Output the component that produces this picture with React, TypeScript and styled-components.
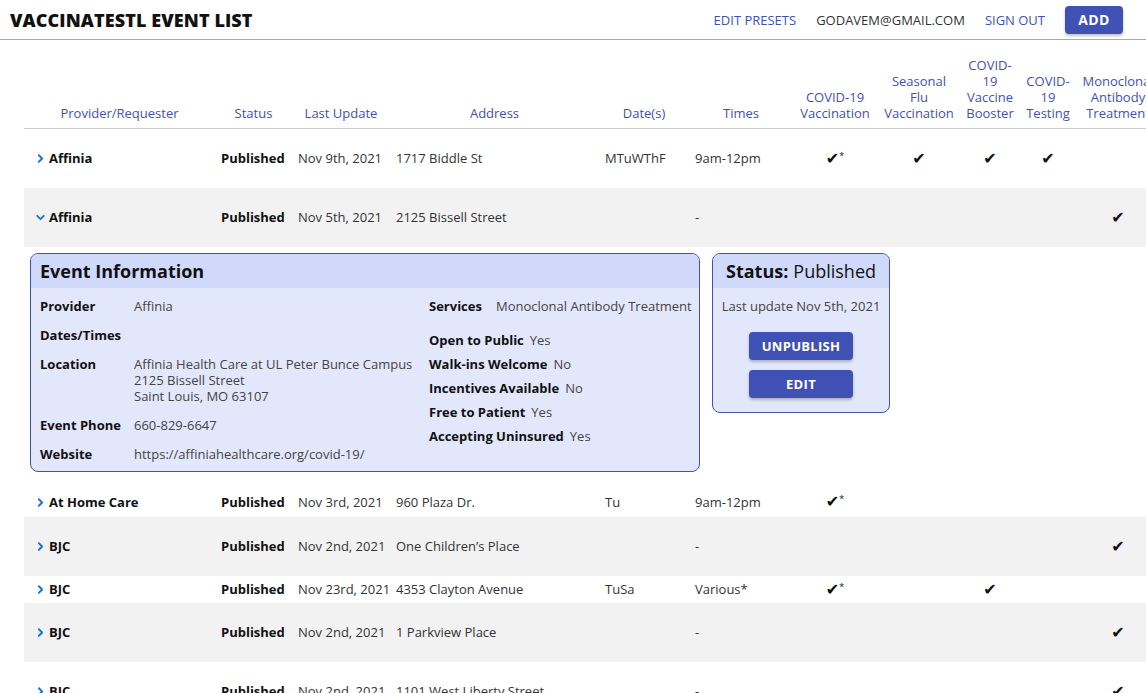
import React from 'react';
import styled, { createGlobalStyle } from 'styled-components';
import { ChevronRight, ChevronDown } from 'lucide-react';

const PRIMARY = '#3f51b5';

interface IEvent {
  id: number;
  name: string;
  status: string;
  updated: string;
  address: string;
  dates: string;
  times: string;
  services: string[];
  height: number;
  expanded?: boolean;
}

const COLUMNS: { label: string[]; width: number }[] = [
  { label: ['Provider/Requester'], width: 191 },
  { label: ['Status'], width: 77 },
  { label: ['Last Update'], width: 98 },
  { label: ['Address'], width: 209 },
  { label: ['Date(s)'], width: 90 },
  { label: ['Times'], width: 104 },
  { label: ['COVID-19', 'Vaccination'], width: 84 },
  { label: ['Seasonal', 'Flu', 'Vaccination'], width: 84 },
  { label: ['COVID-', '19', 'Vaccine', 'Booster'], width: 58 },
  { label: ['COVID-', '19', 'Testing'], width: 58 },
  { label: ['Monoclonal', 'Antibody', 'Treatment'], width: 82 },
];

// service columns: '' = none, 'y' = check, 's' = check with asterisk
const EVENTS: IEvent[] = [
  { id: 1, name: 'Affinia', status: 'Published', updated: 'Nov 9th, 2021', address: '1717 Biddle St', dates: 'MTuWThF', times: '9am-12pm', services: ['s', 'y', 'y', 'y', ''], height: 59 },
  { id: 2, name: 'Affinia', status: 'Published', updated: 'Nov 5th, 2021', address: '2125 Bissell Street', dates: '', times: '-', services: ['', '', '', '', 'y'], height: 59, expanded: true },
  { id: 3, name: 'At Home Care', status: 'Published', updated: 'Nov 3rd, 2021', address: '960 Plaza Dr.', dates: 'Tu', times: '9am-12pm', services: ['s', '', '', '', ''], height: 30 },
  { id: 4, name: 'BJC', status: 'Published', updated: 'Nov 2nd, 2021', address: 'One Children’s Place', dates: '', times: '-', services: ['', '', '', '', 'y'], height: 59 },
  { id: 5, name: 'BJC', status: 'Published', updated: 'Nov 23rd, 2021', address: '4353 Clayton Avenue', dates: 'TuSa', times: 'Various*', services: ['s', '', 'y', '', ''], height: 27 },
  { id: 6, name: 'BJC', status: 'Published', updated: 'Nov 2nd, 2021', address: '1 Parkview Place', dates: '', times: '-', services: ['', '', '', '', 'y'], height: 59 },
  { id: 7, name: 'BJC', status: 'Published', updated: 'Nov 2nd, 2021', address: '1101 West Liberty Street', dates: '', times: '-', services: ['', '', '', '', 'y'], height: 59 },
];

const FLAGS = [
  ['Open to Public', 'Yes'],
  ['Walk-ins Welcome', 'No'],
  ['Incentives Available', 'No'],
  ['Free to Patient', 'Yes'],
  ['Accepting Uninsured', 'Yes'],
];

function Check({ kind }: { kind: string }) {
  if (!kind) return null;
  return (
    <CheckMark>
      ✔{kind === 's' && <sup>*</sup>}
    </CheckMark>
  );
}

function EventDetails() {
  return (
    <DetailsWrapper>
      <InfoCard>
        <CardHeader>Event Information</CardHeader>
        <InfoBody>
          <InfoGrid>
            <Label>Provider</Label>
            <Value>Affinia</Value>
            <Label>Dates/Times</Label>
            <Value />
            <Label>Location</Label>
            <Value>
              Affinia Health Care at UL Peter Bunce Campus
              <br />
              2125 Bissell Street
              <br />
              Saint Louis, MO 63107
            </Value>
            <Label>Event Phone</Label>
            <Value>660-829-6647</Value>
            <Label>Website</Label>
            <Value>https://affiniahealthcare.org/covid-19/</Value>
          </InfoGrid>
          <div>
            <ServicesRow>
              <Label>Services</Label>
              <Value>Monoclonal Antibody Treatment</Value>
            </ServicesRow>
            <FlagList>
              {FLAGS.map(([label, value]) => (
                <FlagRow key={label}>
                  <Label>{label}</Label>
                  <Value>{value}</Value>
                </FlagRow>
              ))}
            </FlagList>
          </div>
        </InfoBody>
      </InfoCard>
      <StatusCard>
        <CardHeader $center>
          <b>Status:</b> Published
        </CardHeader>
        <StatusBody>
          <Value>Last update Nov 5th, 2021</Value>
          <ButtonStack>
            <Button $wide>UNPUBLISH</Button>
            <Button $wide>EDIT</Button>
          </ButtonStack>
        </StatusBody>
      </StatusCard>
    </DetailsWrapper>
  );
}

export default function App() {
  return (
    <>
      <GlobalStyle />
      <TopBar>
        <Title>VACCINATESTL EVENT LIST</Title>
        <Nav>
          <NavLink>EDIT PRESETS</NavLink>
          <NavLink $muted>GODAVEM@GMAIL.COM</NavLink>
          <NavLink>SIGN OUT</NavLink>
          <Button>ADD</Button>
        </Nav>
      </TopBar>
      <TableArea>
        <EventTable>
          <colgroup>
            {COLUMNS.map((c, i) => (
              <col key={i} style={{ width: c.width }} />
            ))}
          </colgroup>
          <thead>
            <tr>
              {COLUMNS.map((c, i) => (
                <HeadCell key={i}>
                  {c.label.map((line, j) => (
                    <HeadLine key={j}>{line}</HeadLine>
                  ))}
                </HeadCell>
              ))}
            </tr>
          </thead>
          <tbody>
            {EVENTS.map((e, i) => (
              <React.Fragment key={e.id}>
                <Row $striped={i % 2 === 1} style={{ height: e.height }}>
                  <NameCell>
                    <Toggle>
                      {e.expanded ? (
                        <ChevronDown size={13} strokeWidth={3.5} />
                      ) : (
                        <ChevronRight size={13} strokeWidth={3.5} />
                      )}
                    </Toggle>
                    {e.name}
                  </NameCell>
                  <StrongCell>{e.status}</StrongCell>
                  <Cell>{e.updated}</Cell>
                  <Cell>{e.address}</Cell>
                  <Cell>{e.dates}</Cell>
                  <Cell>{e.times}</Cell>
                  {e.services.map((s, j) => (
                    <CheckCell key={j}>
                      <Check kind={s} />
                    </CheckCell>
                  ))}
                </Row>
                {e.expanded && (
                  <tr>
                    <DetailCell colSpan={COLUMNS.length}>
                      <EventDetails />
                    </DetailCell>
                  </tr>
                )}
              </React.Fragment>
            ))}
          </tbody>
        </EventTable>
      </TableArea>
    </>
  );
}

const GlobalStyle = createGlobalStyle`
  html, body {
    margin: 0;
    overflow: hidden;
    background: #fff;
    font-family: "Open Sans", "Noto Sans", sans-serif;
    color: #222;
  }
`;

const TopBar = styled.header`
  height: 39px;
  display: flex;
  align-items: center;
  justify-content: space-between;
  padding: 0 23px 0 10px;
  border-bottom: 1px solid #aaa;
`;

const Title = styled.h1`
  margin: 0;
  font-size: 18px;
  font-weight: 800;
  color: #111;
  letter-spacing: 0.1px;
`;

const Nav = styled.nav`
  display: flex;
  align-items: center;
  column-gap: 20px;
`;

const NavLink = styled.a<{ $muted?: boolean }>`
  font-size: 13px;
  color: ${({ $muted }) => ($muted ? '#333' : PRIMARY)};
  cursor: pointer;
`;

const Button = styled.button<{ $wide?: boolean }>`
  height: 28px;
  width: ${({ $wide }) => ($wide ? '104px' : '58px')};
  border: none;
  border-radius: 4px;
  background: ${PRIMARY};
  color: #fff;
  font-family: inherit;
  font-size: ${({ $wide }) => ($wide ? '13px' : '14px')};
  font-weight: 700;
  letter-spacing: 0.3px;
  box-shadow: 0 2px 3px rgba(0, 0, 0, 0.25);
  cursor: pointer;
`;

const TableArea = styled.main`
  padding: 13px 0 0 24px;
`;

const EventTable = styled.table`
  table-layout: fixed;
  width: 1135px;
  border-collapse: collapse;
  font-size: 13px;
`;

const HeadCell = styled.th`
  padding: 4px 0 7px;
  vertical-align: bottom;
  text-align: center;
  white-space: nowrap;
  font-weight: 400;
  color: ${PRIMARY};
  border-bottom: 1px solid #ccc;
`;

const HeadLine = styled.div`
  height: 16px;
  line-height: 16px;
`;

const Row = styled.tr<{ $striped: boolean }>`
  background: ${({ $striped }) => ($striped ? '#f2f2f2' : '#fff')};
`;

const Cell = styled.td`
  padding: 0 0 0 6px;
  vertical-align: middle;
  white-space: nowrap;
  color: #333;
`;

const StrongCell = styled(Cell)`
  font-weight: 700;
  color: #111;
`;

const NameCell = styled(StrongCell)`
  padding-left: 10px;
`;

const Toggle = styled.span`
  display: inline-flex;
  vertical-align: -2px;
  margin-right: 2px;
  color: #1976d2;
`;

const CheckCell = styled.td`
  text-align: center;
  vertical-align: middle;
`;

const CheckMark = styled.span`
  font-family: "DejaVu Sans", sans-serif;
  font-size: 16px;
  color: #111;

  sup {
    font-family: "Open Sans", sans-serif;
    font-size: 9px;
    vertical-align: 5px;
  }
`;

const DetailCell = styled.td`
  padding: 6px 6px 15px;
  background: #fff;
`;

const DetailsWrapper = styled.div`
  display: flex;
  align-items: flex-start;
  column-gap: 12px;
`;

const Card = styled.section`
  border: 1px solid ${PRIMARY};
  border-radius: 8px;
  background: #e3e7fc;
  overflow: hidden;
  box-sizing: border-box;
`;

const InfoCard = styled(Card)`
  width: 670px;
`;

const StatusCard = styled(Card)`
  width: 178px;
`;

const CardHeader = styled.div<{ $center?: boolean }>`
  height: 34px;
  display: flex;
  align-items: center;
  justify-content: ${({ $center }) => ($center ? 'center' : 'flex-start')};
  column-gap: 5px;
  padding: 0 9px;
  background: #d1d9fa;
  font-size: 18px;
  font-weight: ${({ $center }) => ($center ? 400 : 700)};
  color: #111;
`;

const InfoBody = styled.div`
  display: grid;
  grid-template-columns: 389px 1fr;
  padding: 10px 9px 9px;
`;

const InfoGrid = styled.div`
  display: grid;
  grid-template-columns: 94px 1fr;
  row-gap: 13px;
  line-height: 16px;
`;

const Label = styled.span`
  font-weight: 700;
  color: #111;
  white-space: nowrap;
`;

const Value = styled.span`
  color: #444;
`;

const ServicesRow = styled.div`
  display: flex;
  column-gap: 14px;
  line-height: 16px;
  white-space: nowrap;
`;

const FlagList = styled.div`
  margin-top: 18px;
  display: flex;
  flex-direction: column;
  row-gap: 8px;
  line-height: 16px;
`;

const FlagRow = styled.div`
  display: flex;
  column-gap: 6px;
`;

const StatusBody = styled.div`
  display: flex;
  flex-direction: column;
  align-items: center;
  padding: 10px 0 14px;
  line-height: 16px;
`;

const ButtonStack = styled.div`
  display: flex;
  flex-direction: column;
  row-gap: 10px;
  margin-top: 18px;
`;
